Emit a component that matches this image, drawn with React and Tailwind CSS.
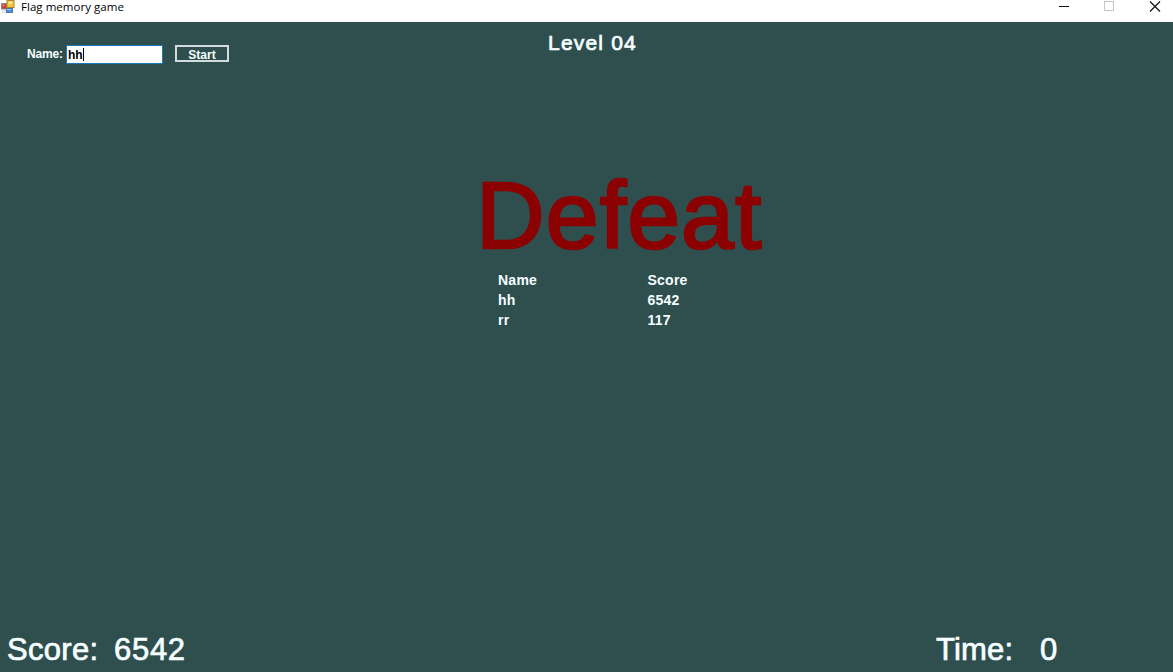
import React from 'react';

function AppIcon() {
  return (
    <svg className="h-[14px] w-[14px] shrink-0" viewBox="0 0 14 14">
      <rect x="0.5" y="3.5" width="5" height="5.5" fill="#c9372c" stroke="#8e8a92" />
      <rect x="1.5" y="4.5" width="2" height="2" fill="#e88a7c" />
      <rect x="1" y="10" width="4" height="3" fill="#e6e9ee" />
      <rect x="5.5" y="8.5" width="6" height="4" fill="#4b93e0" stroke="#5575a8" />
      <rect x="6" y="9" width="4" height="1" fill="#9cc9f5" />
      <rect x="6" y="0.5" width="7" height="7" fill="#f6c63a" stroke="#ad8430" />
      <rect x="7.5" y="1.5" width="4" height="2.5" fill="#fde58a" />
    </svg>
  );
}

function TitleBar() {
  return (
    <header className="flex h-[22px] shrink-0 items-start bg-white pl-px text-black">
      <div className="flex h-[14px] items-center gap-[6px]">
        <AppIcon />
        <h1 className="font-['Open_Sans','Noto_Sans',sans-serif] text-[11.5px] leading-[14px] tracking-[0.04px] whitespace-nowrap">
          Flag memory game
        </h1>
      </div>
      <svg className="ml-auto h-[14px] w-[115px]" viewBox="0 0 115 14" fill="none">
        <path d="M1 6.5h10" stroke="#000" />
        <rect x="46.5" y="1.5" width="9" height="9" stroke="#c4c4c4" />
        <path d="M92 1.5l10 10M102 1.5l-10 10" stroke="#111" strokeWidth="1.2" />
      </svg>
    </header>
  );
}

function PlayerForm() {
  return (
    <div className="flex h-[19px] w-[548px] items-start pl-[27px] text-[12px] font-bold">
      <span className="w-[39px] leading-[18px] tracking-[-0.15px]">Name:</span>
      <div className="flex h-[19px] w-[97px] items-center border border-[#1979ba] bg-white pl-px text-black">
        <span className="pt-[2px] leading-[15px]">hh</span>
        <span className="h-[13px] w-px bg-black" />
      </div>
      <button className="ml-[12px] flex h-[17px] w-[54px] items-start justify-center border-2 border-[#d3dcdc] pt-px">
        <span className="leading-[14px]">Start</span>
      </button>
    </div>
  );
}

const scores = [
  ['Name', 'Score'],
  ['hh', '6542'],
  ['rr', '117'],
];

export default function App() {
  return (
    <div className="flex h-[672px] w-[1173px] flex-col overflow-hidden bg-[#2f4f4f] font-['Liberation_Sans',Arial,sans-serif] text-[#f6ffff]">
      <TitleBar />
      <div className="flex h-[64px] items-start">
        <div className="pt-[23px]">
          <PlayerForm />
        </div>
        <div className="pt-[8px] text-[21px] leading-[25px] tracking-[1.2px] whitespace-nowrap [-webkit-text-stroke:0.7px_currentColor]">
          Level 04
        </div>
      </div>
      <main className="grow pt-[74px] pl-[476px]">
        <h2 className="h-[110px] text-[95px] leading-[110px] tracking-[1.1px] whitespace-nowrap text-[#8b0000] [-webkit-text-stroke:2.5px_currentColor]">
          Defeat
        </h2>
        <div className="pl-[22px] text-[14px] font-bold">
          {scores.map(([name, score]) => (
            <div key={name} className="grid h-[20px] grid-cols-[149.5px_100px] leading-[20px] tracking-[0.25px]">
              <span>{name}</span>
              <span>{score}</span>
            </div>
          ))}
        </div>
      </main>
      <footer className="flex h-[42px] shrink-0 items-start pl-[7px] text-[31px] leading-[40px] whitespace-nowrap [-webkit-text-stroke:0.7px_currentColor]">
        <span className="w-[107px] tracking-[0.3px]">Score:</span>
        <span className="w-[822px] tracking-[0.7px]">6542</span>
        <span className="w-[104px] tracking-[0.2px]">Time:</span>
        <span>0</span>
      </footer>
    </div>
  );
}
